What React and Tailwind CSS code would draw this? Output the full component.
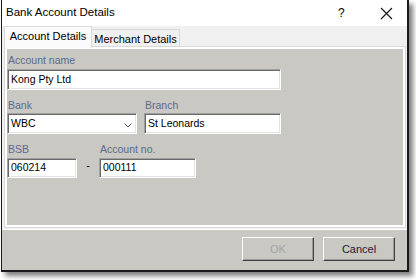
import React from "react";

const font = { fontFamily: '"Liberation Sans", Arial, sans-serif' };

function Label({ children, className = "" }) {
  return (
    <div className={"h-[13px] leading-[13px] text-[10.5px] text-[#5a6a8e] pl-[1px] whitespace-nowrap " + className}>
      {children}
    </div>
  );
}

function Field({ value, className = "", children }) {
  return (
    <div
      className={
        "relative bg-white border border-t-[#a0a0a0] border-l-[#a0a0a0] border-r-white border-b-white shadow-[inset_1px_1px_0_#696969,inset_-1px_-1px_0_#e3e3e3] flex items-center pl-[3px] text-[10.5px] text-black whitespace-nowrap " +
        className
      }
    >
      {value}
      {children}
    </div>
  );
}

function Button({ children, disabled }) {
  return (
    <div
      className={
        "w-[72px] h-[24px] flex items-center justify-center border border-t-white border-l-white border-r-[#404040] border-b-[#404040] shadow-[inset_-1px_-1px_0_#9a9a9a] text-[11px] " +
        (disabled ? "text-[#a5a5a5]" : "text-[#1b1b33]")
      }
    >
      {children}
    </div>
  );
}

export default function App() {
  return (
    <div className="w-[416px] h-[280px] bg-white overflow-hidden" style={font}>
      <div className="ml-[1px] w-[408px] h-[272px] border-l border-r-2 border-b-2 border-[#1a1a1a] shadow-[4px_4px_5px_rgba(0,0,0,0.5)] flex flex-col bg-[#f0f0f0]">
        {/* Title bar */}
        <div className="h-[26px] bg-white flex items-center relative shrink-0">
          <div className="pl-[4px] text-[11.5px] text-black leading-none">Bank Account Details</div>
          <div className="absolute left-[336px] top-[5px] text-[12px] text-black leading-[16px]">?</div>
          <svg className="absolute left-[378px] top-[7px]" width="13" height="13" viewBox="0 0 13 13">
            <path d="M1 1 L12 12 M12 1 L1 12" stroke="#111" strokeWidth="1.1" fill="none" />
          </svg>
        </div>

        {/* Tab area */}
        <div className="h-[203px] pl-[2px] pr-[1px] flex flex-col shrink-0">
          <div className="h-[20px] flex items-end shrink-0 pl-[0px]">
            <div className="relative z-10 w-[88px] h-[22px] -mb-[2px] bg-[#fbfbfb] border border-b-0 border-[#d9d9d9] flex items-start justify-center pt-[3px] text-[11px] text-black leading-[13px] whitespace-nowrap">
              Account Details
            </div>
            <div className="w-[88px] h-[17px] bg-[#f0f0f0] border border-b-0 border-l-0 border-[#d9d9d9] flex items-start justify-center pt-[3px] text-[11px] text-black leading-[13px] whitespace-nowrap">
              Merchant Details
            </div>
          </div>
          <div className="h-[182px] border border-[#d9d9d9]">
            <div className="h-full border-2 border-white bg-[#c9c8c3] pt-[5px]">
              <Label>Account name</Label>
              <Field value="Kong Pty Ltd" className="mt-[2px] w-[274px] h-[21px]" />

              <div className="flex mt-[9px]">
                <div>
                  <Label>Bank</Label>
                  <Field value="WBC" className="mt-[1px] w-[130px] h-[21px]">
                    <svg className="absolute left-[116px] top-[9px]" width="8" height="5" viewBox="0 0 8 5">
                      <path d="M0.5 0.5 L4 4 L7.5 0.5" stroke="#555" strokeWidth="1" fill="none" />
                    </svg>
                  </Field>
                </div>
                <div className="ml-[7px]">
                  <Label>Branch</Label>
                  <Field value="St Leonards" className="mt-[1px] w-[137px] h-[21px]" />
                </div>
              </div>

              <div className="flex mt-[9px]">
                <div>
                  <Label>BSB</Label>
                  <Field value="060214" className="mt-[2px] w-[70px] h-[20px]" />
                </div>
                <div className="w-[22px] flex items-end justify-center pb-[5px] text-[11px] text-black">-</div>
                <div>
                  <Label>Account no.</Label>
                  <Field value="000111" className="mt-[2px] w-[97px] h-[20px]" />
                </div>
              </div>
            </div>
          </div>
        </div>

        {/* Button bar */}
        <div className="flex-1 border-t border-white bg-[#c9c8c3] flex justify-end items-start pt-[7px] pr-[12px] gap-[9px]">
          <Button disabled>OK</Button>
          <Button>Cancel</Button>
        </div>
      </div>
    </div>
  );
}
